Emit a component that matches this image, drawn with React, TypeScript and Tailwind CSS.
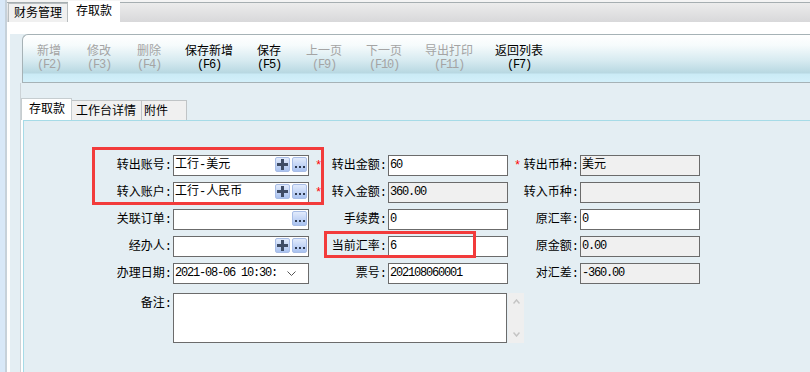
import { Fragment } from "react";

type Cell = {
  label: string;
  star?: boolean;
  value?: string;
  gray?: boolean;
  num?: boolean;
  plus?: boolean;
  dots?: boolean;
  date?: boolean;
};

const tools = [
  { label: "新增", key: "(F2)", w: "w-[50px]", on: false },
  { label: "修改", key: "(F3)", w: "w-[50px]", on: false },
  { label: "删除", key: "(F4)", w: "w-[50px]", on: false },
  { label: "保存新增", key: "(F6)", w: "w-[70px]", on: true },
  { label: "保存", key: "(F5)", w: "w-[50px]", on: true },
  { label: "上一页", key: "(F9)", w: "w-[60px]", on: false },
  { label: "下一页", key: "(F10)", w: "w-[60px]", on: false },
  { label: "导出打印", key: "(F11)", w: "w-[70px]", on: false },
  { label: "返回列表", key: "(F7)", w: "w-[70px]", on: true },
];

const rows: [Cell, Cell, Cell][] = [
  [
    { label: "转出账号:", value: "工行-美元", plus: true, dots: true, star: true },
    { label: "转出金额:", value: "60", num: true },
    { label: "转出币种:", value: "美元", gray: true, star: true },
  ],
  [
    { label: "转入账户:", value: "工行-人民币", plus: true, dots: true, star: true },
    { label: "转入金额:", value: "360.00", num: true, gray: true },
    { label: "转入币种:", value: "", gray: true },
  ],
  [
    { label: "关联订单:", dots: true },
    { label: "手续费:", value: "0", num: true },
    { label: "原汇率:", value: "0", num: true },
  ],
  [
    { label: "经办人:", plus: true, dots: true },
    { label: "当前汇率:", value: "6", num: true },
    { label: "原金额:", value: "0.00", num: true, gray: true },
  ],
  [
    { label: "办理日期:", value: "2021-08-06 10:30:", date: true, num: true },
    { label: "票号:", value: "202108060001", num: true },
    { label: "对汇差:", value: "-360.00", num: true, gray: true },
  ],
];

function PlusBtn() {
  return (
    <span className="w-[15px] h-[15px] shrink-0 rounded-[2px] border border-[#a8bde6] bg-[linear-gradient(to_bottom,#e2ebfc,#a9c2f0)] flex items-center justify-center">
      <svg width="11" height="11" viewBox="0 0 11 11">
        <path d="M4 0h3v4h4v3H7v4H4V7H0V4h4z" fill="#3e4c66" />
      </svg>
    </span>
  );
}

function DotsBtn() {
  return (
    <span className="w-[15px] h-[15px] shrink-0 rounded-[2px] border border-[#a8bde6] bg-[linear-gradient(to_bottom,#e2ebfc,#a9c2f0)] flex items-end justify-center pb-[3px]">
      <svg width="10" height="2" viewBox="0 0 10 2">
        <rect x="0" y="0" width="2" height="2" fill="#2e3a50" />
        <rect x="4" y="0" width="2" height="2" fill="#2e3a50" />
        <rect x="8" y="0" width="2" height="2" fill="#2e3a50" />
      </svg>
    </span>
  );
}

function Field({ value, gray, num, plus, dots, date }: Cell) {
  return (
    <div
      className={`h-[21px] border border-[#6b6b6b] flex items-start ${gray ? "bg-[#f0f0f0]" : "bg-white"}`}
    >
      <span
        className={`flex-1 min-w-0 pl-[1px] pt-[1px] leading-[16px] whitespace-nowrap overflow-hidden ${num ? "tracking-[-1.2px]" : ""}`}
      >
        {value}
      </span>
      {(plus || dots) && (
        <span className="flex gap-[2px] mt-[1px] mr-[1px]">
          {plus && <PlusBtn />}
          {dots && <DotsBtn />}
        </span>
      )}
      {date && (
        <span className="mt-[7px] mr-[12px]">
          <svg width="9" height="5" viewBox="0 0 9 5">
            <path d="M0.5 0.5L4.5 4.5L8.5 0.5" fill="none" stroke="#555" strokeWidth="1" />
          </svg>
        </span>
      )}
    </div>
  );
}

function Star() {
  return <span className="text-[#ff0000] leading-[14px]">*</span>;
}

export default function App() {
  return (
    <div className="relative w-[810px] h-[372px] overflow-hidden flex bg-[#e4eef3] text-[12px] text-black font-['Liberation_Mono','Noto_Sans_CJK_SC',monospace]">
      <div className="w-[5px] shrink-0 bg-[#d8e8f8]" />
      <div className="w-[2px] shrink-0 bg-[#c6d1da]" />

      <div className="flex-1 flex flex-col min-w-0">
        {/* module tabs */}
        <div className="h-[22px] shrink-0 bg-[#f4f4f4] pt-[2px] flex">
          <div className="flex-1 flex items-end border-t border-[#a6aeb1] bg-[linear-gradient(to_bottom,#ececec,#d8d8da)] pl-[1px]">
            <div className="h-[19px] px-[5px] pt-[2px] border border-b-0 border-[#b9bec0] bg-[#f0f0f0] leading-[16px]">
              财务管理
            </div>
            <div className="h-[21px] px-[8px] pt-[3px] bg-white leading-[16px]">存取款</div>
          </div>
        </div>

        <div className="flex-1 flex flex-col border-l-[3px] border-white">
          <div className="h-[12px] shrink-0 bg-white" />

          {/* toolbar */}
          <div className="pl-[12px] flex shrink-0">
            <div className="flex-1 h-[49px] flex items-center pl-[1px] border-t border-b border-l border-[#a6b2b6] rounded-tl-[6px] bg-[linear-gradient(to_bottom,#ffffff_0%,#f6fbfc_22%,#d6eaf0_55%,#b8d8e2_80%,#cbebf6_84%,#d3f0fa_100%)]">
              {tools.map((t) => (
                <div
                  key={t.label}
                  className={`${t.w} shrink-0 flex flex-col items-center leading-[12px] ${t.on ? "text-black" : "text-[#a4a4a4]"}`}
                >
                  <span>{t.label}</span>
                  <span className="tracking-[-1.2px] mt-[1px]">{t.key}</span>
                </div>
              ))}
            </div>
          </div>

          {/* detail tab control */}
          <div className="flex-1 ml-[10px] border-l border-[#ccd3d7] flex flex-col pt-[15px]">
            <div className="flex items-end h-[22px] shrink-0">
              <div className="w-[51px] h-[22px] pl-[7px] pt-[4px] leading-[14px] bg-white border border-b-0 border-[#c6cdd0]">
                存取款
              </div>
              <div className="w-[70px] h-[20px] pl-[4px] pt-[4px] leading-[14px] bg-[#f0f0f0] border border-l-0 border-b-0 border-[#c0c4c6]">
                工作台详情
              </div>
              <div className="w-[45px] h-[20px] pl-[2px] pt-[4px] leading-[14px] bg-[#f0f0f0] border border-l-0 border-b-0 border-[#c0c4c6]">
                附件
              </div>
            </div>

            <div className="flex-1 border-l-2 border-white flex">
              <div className="flex-1 border-l border-t border-[#a6dbe7]">
                <div className="grid grid-cols-[149px_136px_13px_66px_120px_72px_120px] gap-y-[6px] pt-[34px]">
                  {rows.map(([a, b, c]) => (
                    <Fragment key={a.label}>
                      <div className="h-[21px] flex items-center justify-end pr-[1px] leading-[14px]">
                        {a.label}
                      </div>
                      <Field {...a} />
                      <div className="h-[21px] flex items-center pl-[6px]">{a.star && <Star />}</div>
                      <div className="h-[21px] flex items-center justify-end pr-[1px] leading-[14px]">
                        {b.label}
                      </div>
                      <Field {...b} />
                      <div className="h-[21px] flex items-center pl-[6px] leading-[14px]">
                        {c.star && <Star />}
                        <span className="ml-auto pr-[1px]">{c.label}</span>
                      </div>
                      <Field {...c} />
                    </Fragment>
                  ))}

                  <div className="mt-[3px] pt-[4px] flex justify-end pr-[1px] leading-[14px]">备注:</div>
                  <div className="mt-[3px] col-span-5 flex">
                    <div className="w-[334px] h-[50px] border border-[#6b6b6b] bg-white" />
                    <div className="w-[16px] h-[50px] ml-[1px] bg-[#efefef] flex flex-col items-center justify-between py-[6px]">
                      <svg width="7" height="5" viewBox="0 0 7 5">
                        <path d="M0.5 4.5L3.5 1L6.5 4.5" fill="none" stroke="#c4c4c4" strokeWidth="1.5" />
                      </svg>
                      <svg width="7" height="5" viewBox="0 0 7 5">
                        <path d="M0.5 0.5L3.5 4L6.5 0.5" fill="none" stroke="#c4c4c4" strokeWidth="1.5" />
                      </svg>
                    </div>
                  </div>
                </div>
              </div>
            </div>
          </div>
        </div>
      </div>

      {/* red highlight boxes */}
      <div className="absolute left-[92px] top-[147px] w-[232px] h-[58px] border-[3px] border-[#f23b3b] pointer-events-none" />
      <div className="absolute left-[324px] top-[231px] w-[152px] h-[27px] border-[3px] border-[#f23b3b] pointer-events-none" />
    </div>
  );
}
